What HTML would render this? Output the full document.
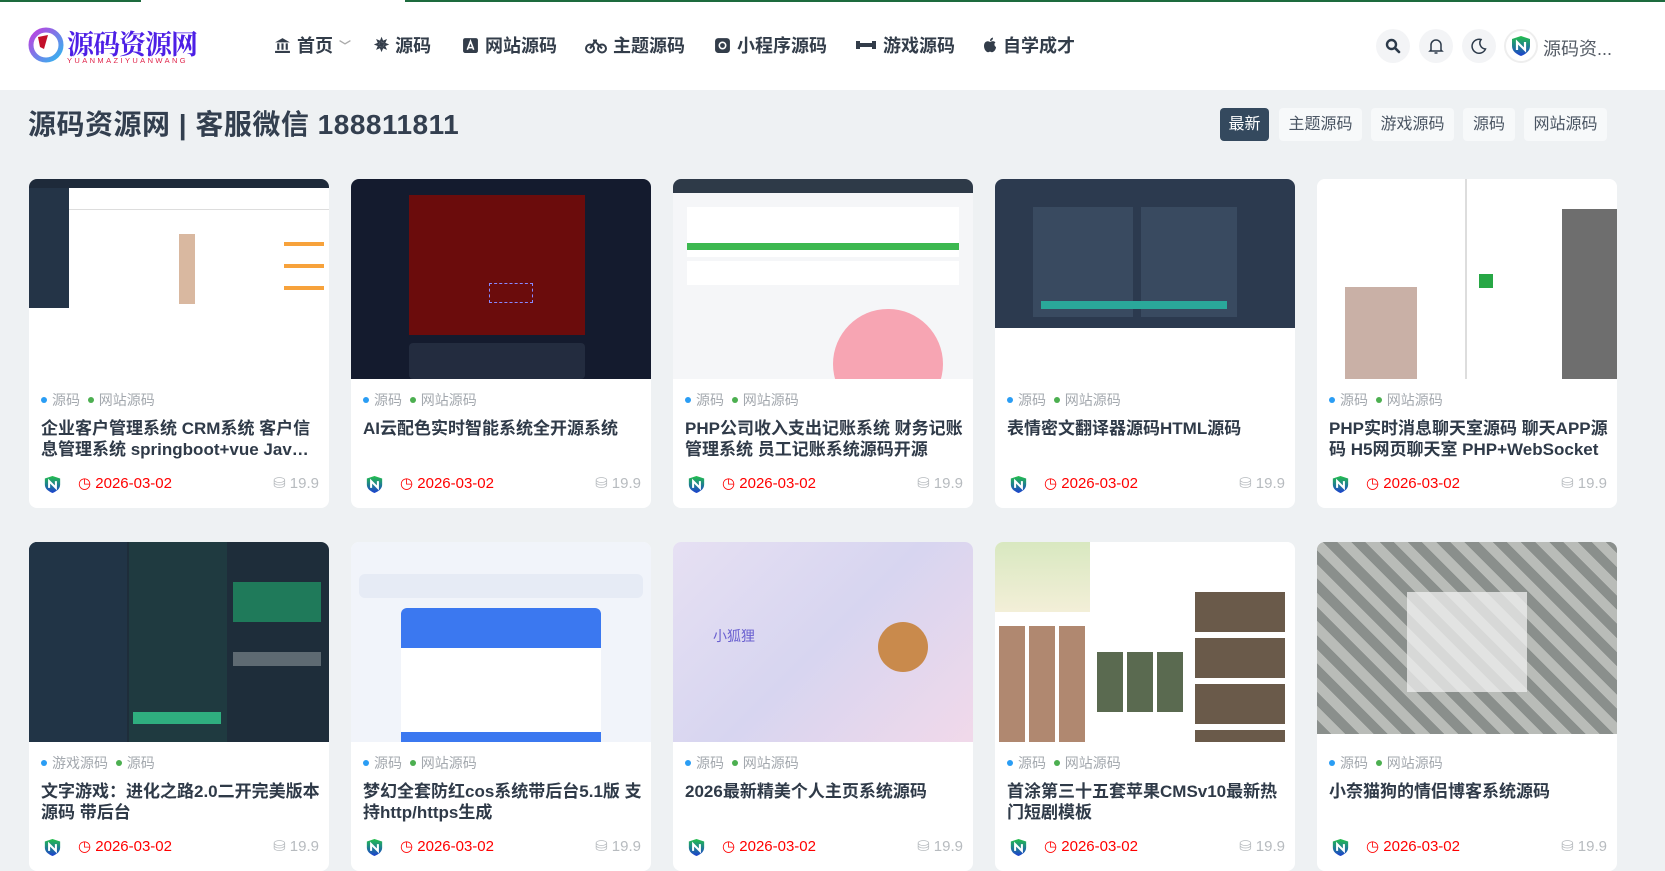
<!DOCTYPE html>
<html><head><meta charset="utf-8"><style>
*{margin:0;padding:0;box-sizing:border-box}
body{width:1665px;height:870px;overflow:hidden;background:#eef1f3;font-family:"Liberation Sans","Noto Sans CJK SC",sans-serif;position:relative}
.hdr{position:absolute;left:0;top:0;width:1665px;height:90px;background:#fff}
.gl{position:absolute;top:0;height:2px;background:#1d6b3e}
.nav{position:absolute;top:32px;font-size:18px;font-weight:bold;color:#333d4a;white-space:nowrap;display:flex;align-items:center;gap:6px}
.ic{display:inline-block;width:17px;height:17px}
.circ{position:absolute;top:29px;width:34px;height:34px;border-radius:50%;background:#f3f4f6;display:flex;align-items:center;justify-content:center}
.title{position:absolute;left:28px;top:103px;font-size:28px;font-weight:bold;color:#333f4f;letter-spacing:0.5px}
.tab{position:absolute;top:108px;height:33px;line-height:33px;font-size:16px;color:#4a5563;background:#f7f9fa;border-radius:4px;text-align:center}
.card{position:absolute;width:300px;height:329px;background:#fff;border-radius:8px;overflow:hidden}
.img{position:absolute;left:0;top:0;width:300px;height:200px;overflow:hidden}
.tags{position:absolute;left:12px;top:211px;font-size:14px;color:#a3a8ae}
.tags i{display:inline-block;width:6px;height:6px;border-radius:50%;margin:0 5px 2px 0;vertical-align:middle}
.t{position:absolute;left:12px;top:239px;width:284px;font-size:17px;font-weight:bold;color:#2f3a48;line-height:21px;max-height:42px;overflow:hidden}
.meta{position:absolute;left:12px;top:295px;width:278px;height:20px}
.av{position:absolute;left:3px;top:1px}
.dt{position:absolute;left:37px;top:0;color:#f00;font-size:15px}
.pr{position:absolute;right:0;top:0;color:#b7bbbf;font-size:15px}
</style></head><body>
<div class="hdr">
<div class="gl" style="left:0;width:141px"></div><div class="gl" style="left:405px;width:1260px"></div>
<svg style="position:absolute;left:28px;top:27px" width="36" height="36" viewBox="0 0 36 36"><defs><linearGradient id="lg" x1="0" y1="0" x2="1" y2="1"><stop offset="0" stop-color="#c03fe0"/><stop offset="1" stop-color="#2fb8f0"/></linearGradient></defs><circle cx="18" cy="18" r="15" fill="none" stroke="url(#lg)" stroke-width="5"/><path d="M10 10 L20 8 L16 22 L12 20Z" fill="#c3102a"/></svg>
<div style="position:absolute;left:67px;top:29px;font-size:27px;line-height:1;font-weight:bold;color:#4d1fe6;font-family:'Noto Serif CJK SC',serif;letter-spacing:-1px">源码资源网</div>
<div style="position:absolute;left:67px;top:57px;font-size:7.5px;line-height:1;color:#e0244a;letter-spacing:2.4px">YUANMAZIYUANWANG</div>
<div class="nav" style="left:274px"><svg class="ic" viewBox="0 0 16 16"><path d="M1 5 L8 1 L15 5Z M3 6h2v6H3z M7 6h2v6H7z M11 6h2v6h-2z M1 13h14v2H1z" fill="#333d4a"/></svg>首页<span style="color:#aaa;font-size:12px">﹀</span></div>
<div class="nav" style="left:374px"><span style="font-size:18px">✵</span>源码</div>
<div class="nav" style="left:462px"><svg class="ic" viewBox="0 0 16 16"><rect x="1" y="1" width="14" height="14" rx="2" fill="#333d4a"/><path d="M5 12 L8 4 L11 12 M6 10h4" stroke="#fff" stroke-width="1.5" fill="none"/></svg>网站源码</div>
<div class="nav" style="left:585px"><svg width="22" height="17" viewBox="0 0 22 16"><circle cx="5" cy="11" r="4" fill="none" stroke="#333d4a" stroke-width="2"/><circle cx="17" cy="11" r="4" fill="none" stroke="#333d4a" stroke-width="2"/><path d="M5 11 L10 4 L17 11 M8 3h4" stroke="#333d4a" stroke-width="2" fill="none"/></svg>主题源码</div>
<div class="nav" style="left:714px"><svg class="ic" viewBox="0 0 16 16"><rect x="1" y="1" width="14" height="14" rx="3" fill="#333d4a"/><circle cx="8" cy="8" r="3" fill="none" stroke="#fff" stroke-width="1.5"/></svg>小程序源码</div>
<div class="nav" style="left:855px"><svg width="22" height="14" viewBox="0 0 22 14"><path d="M1 3h4v8H1z M17 3h4v8h-4z M5 5h12v4H5z" fill="#333d4a"/></svg>游戏源码</div>
<div class="nav" style="left:983px"><svg width="14" height="17" viewBox="0 0 14 17"><path d="M7 5 C4 3 1 5 1 9 C1 13 4 16 6 15 C7 14.5 7 14.5 8 15 C10 16 13 13 13 10 C11 9 11 6 12.5 5.5 C11 3.5 9 4 7 5Z M7 4 C7 2 8 1 10 0.5 C10 2.5 9 4 7 4Z" fill="#333d4a"/></svg>自学成才</div>
<div class="circ" style="left:1376px"><svg width="16" height="16" viewBox="0 0 16 16"><circle cx="6.5" cy="6.5" r="4.5" fill="none" stroke="#2c3a4a" stroke-width="2.4"/><path d="M10 10 L14 14" stroke="#2c3a4a" stroke-width="2.6" stroke-linecap="round"/></svg></div>
<div class="circ" style="left:1419px"><svg width="16" height="17" viewBox="0 0 16 17"><path d="M3 12 V7 a5 5 0 0 1 10 0 V12 L14 13 H2Z M6.5 15 h3" fill="none" stroke="#2c3a4a" stroke-width="1.5"/></svg></div>
<div class="circ" style="left:1462px"><svg width="16" height="16" viewBox="0 0 16 16"><path d="M10 1.5 A7 7 0 1 0 14.5 11 A6 6 0 0 1 10 1.5Z" fill="none" stroke="#2c3a4a" stroke-width="1.5"/></svg></div>
<div class="circ" style="left:1504px;background:#fff;border:2px solid #eee"><svg width="20" height="22" viewBox="0 0 20 22"><defs><linearGradient id="sh" x1="0" y1="0" x2="0" y2="1"><stop offset="0" stop-color="#23c04a"/><stop offset="1" stop-color="#1c3fd1"/></linearGradient></defs><path d="M10 1 L19 4 V11 C19 16 15 19 10 21 C5 19 1 16 1 11 V4Z" fill="url(#sh)"/><path d="M6 15 V7 L14 15 V7" stroke="#fff" stroke-width="2.2" fill="none"/></svg></div>
<div style="position:absolute;left:1543px;top:35px;font-size:18px;color:#555c66">源码资...</div>
</div>
<div class="title">源码资源网 | 客服微信 188811811</div>
<div class="tab" style="left:1220px;width:49px;background:#34495e;color:#fff">最新</div>
<div class="tab" style="left:1279px;width:83px">主题源码</div>
<div class="tab" style="left:1371px;width:83px">游戏源码</div>
<div class="tab" style="left:1463px;width:52px">源码</div>
<div class="tab" style="left:1524px;width:83px">网站源码</div>

<svg width="0" height="0" style="position:absolute"><defs><linearGradient id="sh2" x1="0" y1="0" x2="0" y2="1"><stop offset="0" stop-color="#23c04a"/><stop offset="1" stop-color="#1c3fd1"/></linearGradient></defs></svg>

<div class="card" style="left:29px;top:179px">
<div class="img" style="background:#fff"><div style="position:absolute;left:0;top:0;width:300px;height:9px;background:#1e2a3a"></div><div style="position:absolute;left:0;top:9px;width:40px;height:120px;background:#243447"></div><div style="position:absolute;left:40px;top:30px;width:260px;height:1px;background:#ddd"></div><div style="position:absolute;left:150px;top:55px;width:16px;height:70px;background:#d9b8a0"></div><div style="position:absolute;left:255px;top:60px;width:40px;height:66px;background:repeating-linear-gradient(#fff 0 3px,#f7a23b 3px 7px,#fff 7px 22px)"></div><div style="position:absolute;left:0;top:129px;width:300px;height:71px;background:#fff"></div></div>
<div class="tags"><i style="background:#2a9df4"></i>源码 &nbsp;<i style="background:#4caf50"></i>网站源码</div>
<div class="t">企业客户管理系统 CRM系统 客户信息管理系统 springboot+vue Jav…</div>
<div class="meta"><svg class="av" width="17" height="19" viewBox="0 0 20 22"><path d="M10 1 L19 4 V11 C19 16 15 19 10 21 C5 19 1 16 1 11 V4Z" fill="url(#sh2)"/><path d="M6 15 V7 L14 15 V7" stroke="#fff" stroke-width="2.4" fill="none"/></svg><span class="dt">◷ 2026-03-02</span><span class="pr">⛁ 19.9</span></div></div>

<div class="card" style="left:351px;top:179px">
<div class="img" style="background:#141b2e"><div style="position:absolute;left:58px;top:16px;width:176px;height:140px;background:#6b0c0c"></div><div style="position:absolute;left:138px;top:104px;width:44px;height:20px;border:1px dashed #88f"></div><div style="position:absolute;left:58px;top:164px;width:176px;height:36px;background:#232c3f;border-radius:4px"></div></div>
<div class="tags"><i style="background:#2a9df4"></i>源码 &nbsp;<i style="background:#4caf50"></i>网站源码</div>
<div class="t">AI云配色实时智能系统全开源系统</div>
<div class="meta"><svg class="av" width="17" height="19" viewBox="0 0 20 22"><path d="M10 1 L19 4 V11 C19 16 15 19 10 21 C5 19 1 16 1 11 V4Z" fill="url(#sh2)"/><path d="M6 15 V7 L14 15 V7" stroke="#fff" stroke-width="2.4" fill="none"/></svg><span class="dt">◷ 2026-03-02</span><span class="pr">⛁ 19.9</span></div></div>

<div class="card" style="left:673px;top:179px">
<div class="img" style="background:#f5f6f8"><div style="position:absolute;left:0;top:0;width:300px;height:14px;background:#2e3a48"></div><div style="position:absolute;left:14px;top:28px;width:272px;height:50px;background:#fff"></div><div style="position:absolute;left:14px;top:64px;width:272px;height:7px;background:#3cb850"></div><div style="position:absolute;left:14px;top:82px;width:272px;height:24px;background:#fff"></div><div style="position:absolute;left:160px;top:130px;width:110px;height:110px;border-radius:50%;background:#f7a5b3"></div></div>
<div class="tags"><i style="background:#2a9df4"></i>源码 &nbsp;<i style="background:#4caf50"></i>网站源码</div>
<div class="t">PHP公司收入支出记账系统 财务记账管理系统 员工记账系统源码开源</div>
<div class="meta"><svg class="av" width="17" height="19" viewBox="0 0 20 22"><path d="M10 1 L19 4 V11 C19 16 15 19 10 21 C5 19 1 16 1 11 V4Z" fill="url(#sh2)"/><path d="M6 15 V7 L14 15 V7" stroke="#fff" stroke-width="2.4" fill="none"/></svg><span class="dt">◷ 2026-03-02</span><span class="pr">⛁ 19.9</span></div></div>

<div class="card" style="left:995px;top:179px">
<div class="img" style="background:#fff"><div style="position:absolute;left:0;top:0;width:300px;height:149px;background:#2c3a4f"></div><div style="position:absolute;left:38px;top:28px;width:100px;height:110px;background:#394a60"></div><div style="position:absolute;left:146px;top:28px;width:96px;height:110px;background:#394a60"></div><div style="position:absolute;left:46px;top:122px;width:186px;height:8px;background:#2aa89a"></div></div>
<div class="tags"><i style="background:#2a9df4"></i>源码 &nbsp;<i style="background:#4caf50"></i>网站源码</div>
<div class="t">表情密文翻译器源码HTML源码</div>
<div class="meta"><svg class="av" width="17" height="19" viewBox="0 0 20 22"><path d="M10 1 L19 4 V11 C19 16 15 19 10 21 C5 19 1 16 1 11 V4Z" fill="url(#sh2)"/><path d="M6 15 V7 L14 15 V7" stroke="#fff" stroke-width="2.4" fill="none"/></svg><span class="dt">◷ 2026-03-02</span><span class="pr">⛁ 19.9</span></div></div>

<div class="card" style="left:1317px;top:179px">
<div class="img" style="background:#fff"><div style="position:absolute;left:148px;top:0;width:2px;height:200px;background:#ddd"></div><div style="position:absolute;left:28px;top:108px;width:72px;height:92px;background:#c9b0a6"></div><div style="position:absolute;left:245px;top:30px;width:55px;height:170px;background:#6e6e6e"></div><div style="position:absolute;left:162px;top:95px;width:14px;height:14px;background:#27a745"></div></div>
<div class="tags"><i style="background:#2a9df4"></i>源码 &nbsp;<i style="background:#4caf50"></i>网站源码</div>
<div class="t">PHP实时消息聊天室源码 聊天APP源码 H5网页聊天室 PHP+WebSocket</div>
<div class="meta"><svg class="av" width="17" height="19" viewBox="0 0 20 22"><path d="M10 1 L19 4 V11 C19 16 15 19 10 21 C5 19 1 16 1 11 V4Z" fill="url(#sh2)"/><path d="M6 15 V7 L14 15 V7" stroke="#fff" stroke-width="2.4" fill="none"/></svg><span class="dt">◷ 2026-03-02</span><span class="pr">⛁ 19.9</span></div></div>

<div class="card" style="left:29px;top:542px">
<div class="img" style="background:#1e2d3a"><div style="position:absolute;left:0;top:0;width:98px;height:200px;background:#213446"></div><div style="position:absolute;left:100px;top:0;width:98px;height:200px;background:#1f3a40"></div><div style="position:absolute;left:104px;top:170px;width:88px;height:12px;background:#2fae7f"></div><div style="position:absolute;left:204px;top:40px;width:88px;height:40px;background:#1f7a5a"></div><div style="position:absolute;left:204px;top:110px;width:88px;height:14px;background:#5e6a72"></div></div>
<div class="tags"><i style="background:#2a9df4"></i>游戏源码 &nbsp;<i style="background:#4caf50"></i>源码</div>
<div class="t">文字游戏：进化之路2.0二开完美版本源码 带后台</div>
<div class="meta"><svg class="av" width="17" height="19" viewBox="0 0 20 22"><path d="M10 1 L19 4 V11 C19 16 15 19 10 21 C5 19 1 16 1 11 V4Z" fill="url(#sh2)"/><path d="M6 15 V7 L14 15 V7" stroke="#fff" stroke-width="2.4" fill="none"/></svg><span class="dt">◷ 2026-03-02</span><span class="pr">⛁ 19.9</span></div></div>

<div class="card" style="left:351px;top:542px">
<div class="img" style="background:#f1f4fa"><div style="position:absolute;left:8px;top:32px;width:284px;height:24px;background:#e6ebf5;border-radius:6px"></div><div style="position:absolute;left:50px;top:66px;width:200px;height:40px;background:#3b78f0;border-radius:6px 6px 0 0"></div><div style="position:absolute;left:50px;top:106px;width:200px;height:94px;background:#fff"></div><div style="position:absolute;left:50px;top:190px;width:200px;height:10px;background:#3b78f0"></div></div>
<div class="tags"><i style="background:#2a9df4"></i>源码 &nbsp;<i style="background:#4caf50"></i>网站源码</div>
<div class="t">梦幻全套防红cos系统带后台5.1版 支持http/https生成</div>
<div class="meta"><svg class="av" width="17" height="19" viewBox="0 0 20 22"><path d="M10 1 L19 4 V11 C19 16 15 19 10 21 C5 19 1 16 1 11 V4Z" fill="url(#sh2)"/><path d="M6 15 V7 L14 15 V7" stroke="#fff" stroke-width="2.4" fill="none"/></svg><span class="dt">◷ 2026-03-02</span><span class="pr">⛁ 19.9</span></div></div>

<div class="card" style="left:673px;top:542px">
<div class="img" style="background:linear-gradient(135deg,#e6e0f3,#d7d5f0 50%,#f1d9ea)"><div style="position:absolute;left:40px;top:84px;font-size:14px;color:#6a60d0">小狐狸</div><div style="position:absolute;left:205px;top:80px;width:50px;height:50px;border-radius:50%;background:#c98a4c"></div></div>
<div class="tags"><i style="background:#2a9df4"></i>源码 &nbsp;<i style="background:#4caf50"></i>网站源码</div>
<div class="t">2026最新精美个人主页系统源码</div>
<div class="meta"><svg class="av" width="17" height="19" viewBox="0 0 20 22"><path d="M10 1 L19 4 V11 C19 16 15 19 10 21 C5 19 1 16 1 11 V4Z" fill="url(#sh2)"/><path d="M6 15 V7 L14 15 V7" stroke="#fff" stroke-width="2.4" fill="none"/></svg><span class="dt">◷ 2026-03-02</span><span class="pr">⛁ 19.9</span></div></div>

<div class="card" style="left:995px;top:542px">
<div class="img" style="background:#fff"><div style="position:absolute;left:0;top:0;width:95px;height:70px;background:linear-gradient(#d8e8c0,#f3efd8)"></div><div style="position:absolute;left:4px;top:84px;width:90px;height:116px;background:repeating-linear-gradient(90deg,#b08870 0 26px,#fff 26px 30px)"></div><div style="position:absolute;left:102px;top:110px;width:88px;height:60px;background:repeating-linear-gradient(90deg,#5a6a50 0 26px,#fff 26px 30px)"></div><div style="position:absolute;left:200px;top:50px;width:90px;height:150px;background:repeating-linear-gradient(#6a5a4a 0 40px,#fff 40px 46px)"></div></div>
<div class="tags"><i style="background:#2a9df4"></i>源码 &nbsp;<i style="background:#4caf50"></i>网站源码</div>
<div class="t">首涂第三十五套苹果CMSv10最新热门短剧模板</div>
<div class="meta"><svg class="av" width="17" height="19" viewBox="0 0 20 22"><path d="M10 1 L19 4 V11 C19 16 15 19 10 21 C5 19 1 16 1 11 V4Z" fill="url(#sh2)"/><path d="M6 15 V7 L14 15 V7" stroke="#fff" stroke-width="2.4" fill="none"/></svg><span class="dt">◷ 2026-03-02</span><span class="pr">⛁ 19.9</span></div></div>

<div class="card" style="left:1317px;top:542px">
<div class="img" style="background:repeating-linear-gradient(45deg,#8a8f8c 0 10px,#b9bcb8 10px 20px),#999;height:192px"><div style="position:absolute;left:90px;top:50px;width:120px;height:100px;background:rgba(240,240,240,.75)"></div></div>
<div class="tags"><i style="background:#2a9df4"></i>源码 &nbsp;<i style="background:#4caf50"></i>网站源码</div>
<div class="t">小奈猫狗的情侣博客系统源码</div>
<div class="meta"><svg class="av" width="17" height="19" viewBox="0 0 20 22"><path d="M10 1 L19 4 V11 C19 16 15 19 10 21 C5 19 1 16 1 11 V4Z" fill="url(#sh2)"/><path d="M6 15 V7 L14 15 V7" stroke="#fff" stroke-width="2.4" fill="none"/></svg><span class="dt">◷ 2026-03-02</span><span class="pr">⛁ 19.9</span></div></div>
</body></html>
